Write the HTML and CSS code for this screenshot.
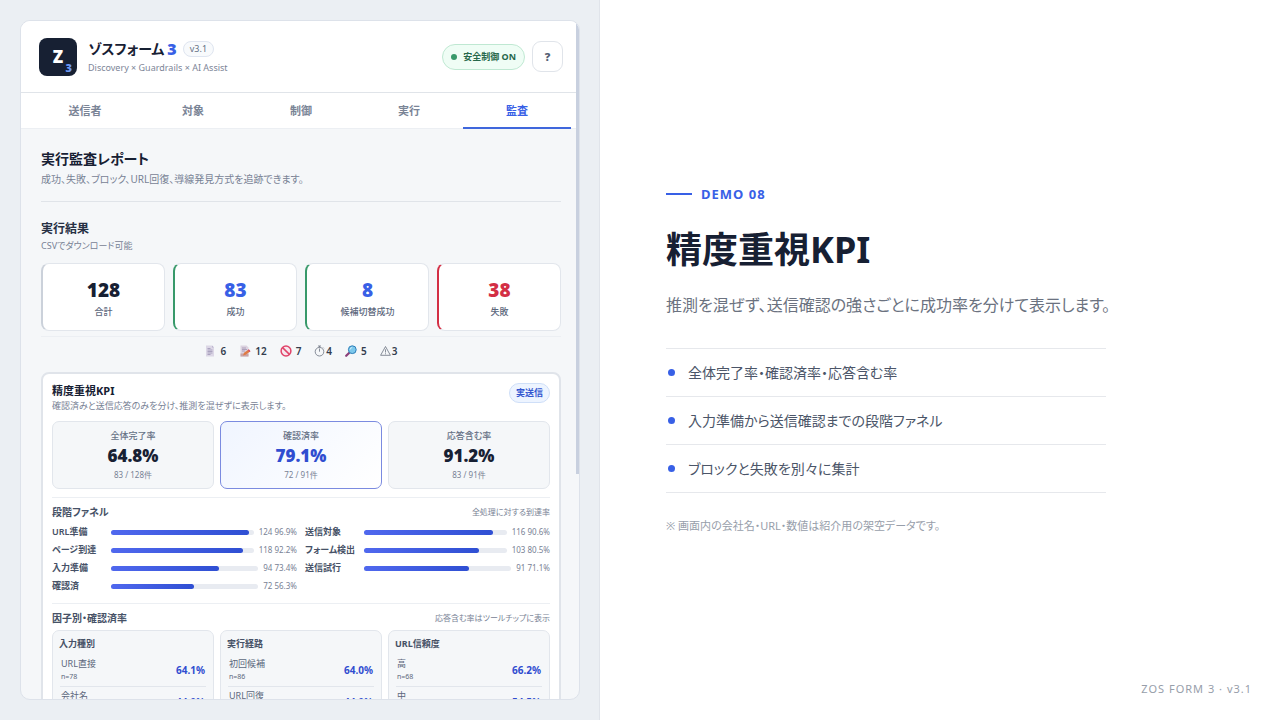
FILE: index.html
```html
<!DOCTYPE html>
<html lang="ja">
<head>
  <meta charset="UTF-8">
  <meta name="viewport" content="width=device-width, initial-scale=1.0">
  <title>ZOS FORM 3 – 精度重視KPI</title>
  <link rel="stylesheet" href="styles.css">
</head>
<body>
  <div class="slide">
    <section class="stage">
      <div class="app">
        <header class="app-header">
          <div class="logo">Z<span class="logo-sub">3</span></div>
          <div class="brand">
            <div class="brand-name">ゾスフォーム <b>3</b><span class="version">v3.1</span></div>
            <div class="brand-sub">Discovery × Guardrails × AI Assist</div>
          </div>
          <div class="safe"><i class="dot"></i>安全制御 ON</div>
          <button class="help" type="button">?</button>
        </header>

        <nav class="tabs">
          <button type="button">送信者</button>
          <button type="button">対象</button>
          <button type="button">制御</button>
          <button type="button">実行</button>
          <button type="button" class="active">監査</button>
        </nav>

        <main class="content">
          <div class="page-head">
            <h2>実行監査レポート</h2>
            <p>成功、失敗、ブロック、URL回復、導線発見方式を追跡できます。</p>
          </div>

          <div class="result-head">
            <h3>実行結果</h3>
            <p>CSVでダウンロード可能</p>
          </div>
          <div class="stats">
            <div class="stat"><strong>128</strong><span>合計</span></div>
            <div class="stat good"><strong>83</strong><span>成功</span></div>
            <div class="stat good"><strong>8</strong><span>候補切替成功</span></div>
            <div class="stat bad"><strong>38</strong><span>失敗</span></div>
          </div>

          <div class="reasons">
            <span>
              <svg width="12" height="12" viewBox="0 0 12 12"><path d="M2 .5h6l2 2v9H2z" fill="#dcd7e6"/><path d="M8 .5v2h2z" fill="#b9b1cc"/><path d="M3.5 3.5h3M3.5 5h5M3.5 6.500h5M3.5 8h5M3.500 9.500h3" stroke="#9d94b5" stroke-width=".8"/></svg>6
            </span>
            <span>
              <svg width="12" height="12" viewBox="0 0 12 12"><path d="M1.500 .5h6l2 2v9h-8z" fill="#dcd3e0"/><path d="M3 3h4M3 4.500h5M3 6h3" stroke="#a195b3" stroke-width=".8"/><path d="M1.500 8.500h8v3h-8z" fill="#c9a3a5"/><path d="M4 10.500l1-2.800 4.600-3.200 1.600 2-4.600 3.300z" fill="#e07b45"/><path d="M9 5l.9-.8 1.600 2-.9.700z" fill="#d6426a"/></svg>12
            </span>
            <span>
              <svg width="12" height="12" viewBox="0 0 12 12"><circle cx="6" cy="6" r="4.900" fill="#f6e8ee" stroke="#e0446a" stroke-width="1.500"/><path d="M2.600 2.600l6.800 6.800" stroke="#e0446a" stroke-width="1.500"/></svg>7
            </span>
            <span class="tight">
              <svg width="11" height="12" viewBox="0 0 11 12" fill="none" stroke="#6b7280" stroke-width=".8"><circle cx="5.500" cy="6.700" r="4.300"/><path d="M5.500 6.700V3.500M5.500 2.400V1M4 1h3M9 2.500l.8.800"/></svg>4
            </span>
            <span>
              <svg width="12" height="12" viewBox="0 0 12 12"><path d="M4.800 7.200L1.200 10.800" stroke="#8a3f79" stroke-width="2.200" stroke-linecap="round"/><circle cx="7.300" cy="4.700" r="3.900" fill="#7cc8ec" stroke="#2f7fb8" stroke-width="1"/><path d="M5.200 4.500a2.200 2.200 0 0 1 2-2" stroke="#d4f0fb" fill="none"/></svg>5
            </span>
            <span class="tight">
              <svg width="11" height="12" viewBox="0 0 11 12" fill="none" stroke="#6b7280" stroke-width=".8"><path d="M5.500 1.500l4.900 8.800H.6z"/><path d="M5.500 4.300v3.200M5.500 8.300v1"/></svg>3
            </span>
          </div>

          <section class="kpi">
            <div class="kpi-head">
              <div>
                <h3>精度重視KPI</h3>
                <p>確認済みと送信応答のみを分け、推測を混ぜずに表示します。</p>
              </div>
              <span class="tag">実送信</span>
            </div>
            <div class="tiles">
              <div class="tile"><span>全体完了率</span><strong>64.8%</strong><small>83 / 128件</small></div>
              <div class="tile main"><span>確認済率</span><strong>79.1%</strong><small>72 / 91件</small></div>
              <div class="tile"><span>応答含む率</span><strong>91.2%</strong><small>83 / 91件</small></div>
            </div>

            <div class="block">
              <div class="block-head"><h4>段階ファネル</h4><span>全処理に対する到達率</span></div>
              <div class="funnel">
                <div class="step"><b>URL準備</b><div class="bar"><i style="width:96.9%"></i></div><span>124 96.9%</span></div>
                <div class="step"><b>送信対象</b><div class="bar"><i style="width:90.6%"></i></div><span>116 90.6%</span></div>
                <div class="step"><b>ページ到達</b><div class="bar"><i style="width:92.2%"></i></div><span>118 92.2%</span></div>
                <div class="step"><b>フォーム検出</b><div class="bar"><i style="width:80.5%"></i></div><span>103 80.5%</span></div>
                <div class="step"><b>入力準備</b><div class="bar"><i style="width:73.4%"></i></div><span>94 73.4%</span></div>
                <div class="step"><b>送信試行</b><div class="bar"><i style="width:71.1%"></i></div><span>91 71.1%</span></div>
                <div class="step"><b>確認済</b><div class="bar"><i style="width:56.3%"></i></div><span>72 56.3%</span></div>
              </div>
            </div>

            <div class="block">
              <div class="block-head"><h4>因子別・確認済率</h4><span>応答含む率はツールチップに表示</span></div>
              <div class="factors">
                <div class="factor">
                  <h5>入力種別</h5>
                  <div class="row"><div>URL直接<small>n=78</small></div><b>64.1%</b></div>
                  <div class="row"><div>会社名</div><b>44.0%</b></div>
                </div>
                <div class="factor">
                  <h5>実行経路</h5>
                  <div class="row"><div>初回候補<small>n=86</small></div><b>64.0%</b></div>
                  <div class="row"><div>URL回復</div><b>44.0%</b></div>
                </div>
                <div class="factor">
                  <h5>URL信頼度</h5>
                  <div class="row"><div>高<small>n=68</small></div><b>66.2%</b></div>
                  <div class="row"><div>中</div><b>54.5%</b></div>
                </div>
              </div>
            </div>
          </section>
        </main>
        <div class="scrollbar"></div>
      </div>
    </section>

    <section class="copy">
      <div class="copy-body">
        <div class="eyebrow">DEMO 08</div>
        <h1>精度重視KPI</h1>
        <p class="lead">推測を混ぜず、送信確認の強さごとに成功率を分けて表示します。</p>
        <ul class="points">
          <li>全体完了率・確認済率・応答含む率</li>
          <li>入力準備から送信確認までの段階ファネル</li>
          <li>ブロックと失敗を別々に集計</li>
        </ul>
        <p class="note">※ 画面内の会社名・URL・数値は紹介用の架空データです。</p>
      </div>
      <footer>ZOS FORM 3 · v3.1</footer>
    </section>
  </div>
</body>
</html>
```
FILE: styles.css
```css
* {
  box-sizing: border-box;
}
body {
  margin: 0;
  font-family: "Noto Sans", "Noto Sans CJK JP", sans-serif;
  font-feature-settings: "palt";
  color: #172033;
  background: #fff;
}
h1, h2, h3, h4, h5, p, ul {
  margin: 0;
  padding: 0;
}
button {
  font: inherit;
  font-feature-settings: inherit;
  cursor: pointer;
}
.slide {
  display: grid;
  grid-template-columns: 15fr 17fr;
  height: 100vh;
}

/* Left: app window */
.stage {
  display: flex;
  min-height: 0;
  padding: 20px;
  background: #ebeff3;
  box-shadow: inset -1px 0 #e0e4ea;
}
.app {
  position: relative;
  flex: 1;
  min-width: 0;
  overflow: hidden;
  background: #f5f7f9;
  border: 1px solid #dde2ea;
  border-radius: 10px;
}
.app-header {
  display: flex;
  align-items: center;
  height: 72px;
  padding: 0 16px 0 18px;
  background: #fff;
  border-bottom: 1px solid #e0e4e9;
}
.logo {
  position: relative;
  width: 38px;
  height: 38px;
  border-radius: 8px;
  background: #172033;
  color: #fff;
  font-size: 17px;
  font-weight: 900;
  line-height: 38px;
  text-align: center;
}
.logo-sub {
  position: absolute;
  right: 5px;
  bottom: 2px;
  color: #6d9af5;
  font-size: 11px;
  line-height: 12px;
}
.brand {
  flex: 1;
  margin-left: 11px;
}
.brand-name {
  display: flex;
  align-items: center;
  font-size: 14px;
  font-weight: 700;
  line-height: 20px;
}
.brand-name b {
  margin-left: 3px;
  color: #3860e6;
  font-size: 16px;
  font-weight: 900;
}
.version {
  margin-left: 6px;
  padding: 0 6px;
  border: 1px solid #dfe5f0;
  border-radius: 8px;
  background: #f8fafc;
  color: #647084;
  font-size: 9px;
  font-weight: 400;
  line-height: 14px;
}
.brand-sub {
  margin-top: 2px;
  color: #7c8597;
  font-size: 9px;
  line-height: 14px;
}
.safe {
  display: flex;
  align-items: center;
  gap: 6px;
  height: 26px;
  padding: 0 8px;
  border: 1px solid #bfe8d2;
  border-radius: 13px;
  background: #effdf5;
  color: #27684b;
  font-size: 9px;
  font-weight: 700;
}
.dot {
  width: 6px;
  height: 6px;
  border-radius: 50%;
  background: #38996a;
}
.help {
  width: 31px;
  height: 31px;
  margin-left: 7px;
  padding: 0;
  border: 1px solid #e0e4ea;
  border-radius: 9px;
  background: #fff;
  color: #566174;
  font-size: 11px;
  font-weight: 900;
}
.tabs {
  display: flex;
  height: 36px;
  padding: 0 8px 0 10px;
  background: #fff;
  border-bottom: 1px solid #eceff3;
}
.tabs button {
  flex: 1;
  height: 36px;
  padding: 0;
  border: 0;
  border-bottom: 2px solid transparent;
  background: none;
  color: #7a8496;
  font-size: 11px;
  font-weight: 700;
}
.tabs .active {
  color: #3860e6;
  border-bottom-color: #3f67dc;
}
.content {
  padding: 20px 18px 0 20px;
}
.page-head {
  padding-bottom: 14px;
  border-bottom: 1px solid #e0e4e9;
}
.page-head h2 {
  font-size: 14px;
  line-height: 20px;
}
.page-head p {
  margin-top: 2px;
  color: #788295;
  font-size: 10px;
  line-height: 16px;
}
.result-head {
  padding: 18px 0 9px;
}
.result-head h3 {
  color: #273044;
  font-size: 12px;
  line-height: 18px;
}
.result-head p {
  color: #788295;
  font-size: 9px;
  line-height: 16px;
}
.stats {
  display: grid;
  grid-template-columns: repeat(4, 1fr);
  gap: 8px;
}
.stat {
  display: flex;
  flex-direction: column;
  align-items: center;
  height: 68px;
  padding: 14px 0 0;
  border: 1px solid #e2e6ec;
  border-left: 2px solid #cbd1da;
  border-radius: 8px;
  background: #fff;
}
.stat strong {
  font-size: 19px;
  font-weight: 900;
  line-height: 24px;
}
.stat span {
  margin-top: 3px;
  color: #5c677c;
  font-size: 9px;
  font-weight: 500;
  line-height: 14px;
}
.stat.good {
  border-left-color: #38996a;
}
.stat.good strong {
  color: #3860e6;
}
.stat.bad {
  border-left-color: #d32f45;
}
.stat.bad strong {
  color: #d32f45;
}
.reasons {
  display: flex;
  justify-content: center;
  gap: 13px;
  margin-top: 5px;
  padding: 7px 0 14px;
  border-top: 1px solid #eceff3;
  color: #333c4d;
  font-size: 10px;
  font-weight: 600;
  line-height: 14px;
}
.reasons span {
  display: flex;
  align-items: center;
  gap: 4px;
}
.reasons .tight {
  gap: 1px;
}

/* KPI panel */
.kpi {
  padding: 9px;
  border: 2px solid #e0e4ea;
  border-radius: 8px;
  background: #fff;
}
.kpi-head {
  display: flex;
  justify-content: space-between;
  align-items: center;
}
.kpi-head h3 {
  font-size: 11px;
  line-height: 16px;
}
.kpi-head p {
  color: #788295;
  font-size: 9px;
  line-height: 14px;
}
.tag {
  margin-bottom: 10px;
  padding: 0 6px;
  border: 1px solid #cfdff8;
  border-radius: 10px;
  background: #edf4ff;
  color: #3456d0;
  font-size: 9px;
  font-weight: 700;
  line-height: 18px;
}
.tiles, .factors {
  display: grid;
  grid-template-columns: repeat(3, 1fr);
  gap: 6px;
}
.tiles {
  margin-top: 8px;
}
.tile {
  display: flex;
  flex-direction: column;
  align-items: center;
  height: 68px;
  padding-top: 7px;
  border: 1px solid #e2e6ec;
  border-radius: 7px;
  background: #f5f7f9;
}
.tile span {
  color: #667186;
  font-size: 9px;
  font-weight: 500;
  line-height: 14px;
}
.tile strong {
  font-size: 17px;
  font-weight: 900;
  line-height: 26px;
}
.tile small {
  color: #788295;
  font-size: 8px;
  line-height: 12px;
}
.tile.main {
  border-color: #7b8be0;
  background: linear-gradient(135deg, #f0f5ff, #fff);
}
.tile.main strong {
  color: #304dd0;
}
.block {
  margin-top: 8px;
  padding-top: 5px;
  border-top: 1px solid #eceff3;
}
.block-head {
  display: flex;
  justify-content: space-between;
  line-height: 18px;
}
.block-head h4 {
  color: #465166;
  font-size: 10px;
}
.block-head span {
  color: #788295;
  font-size: 8px;
}
.funnel {
  display: grid;
  grid-template-columns: 1fr 1fr;
  gap: 4px 8px;
  margin-top: 4px;
  padding-bottom: 2px;
}
.step {
  display: flex;
  align-items: center;
  gap: 5px;
  line-height: 14px;
}
.step b {
  width: 54px;
  color: #465166;
  font-size: 9px;
  font-weight: 600;
}
.step span {
  color: #788295;
  font-size: 8px;
}
.bar {
  flex: 1;
  height: 5px;
  border-radius: 3px;
  background: #e8ebf1;
}
.bar i {
  display: block;
  height: 100%;
  border-radius: 3px;
  background: linear-gradient(90deg, #5068ee, #2f4fd3);
}
.factors {
  margin-top: 3px;
}
.factor {
  padding: 6px;
  border: 1px solid #e2e6ec;
  border-radius: 7px;
  background: #f5f7f9;
}
.factor h5 {
  margin-bottom: 4px;
  color: #465166;
  font-size: 9px;
  line-height: 14px;
}
.row {
  display: flex;
  justify-content: space-between;
  align-items: center;
  min-height: 32px;
  margin: 0 1px;
  padding: 2px 1px 3px;
  border-bottom: 1px solid #e2e6ec;
  color: #5c677c;
  font-size: 9px;
  line-height: 14px;
}
.row div {
  align-self: flex-start;
}
.row small {
  display: block;
  font-size: 7px;
  line-height: 12px;
}
.row b {
  color: #304dd0;
  font-size: 10px;
}
.scrollbar {
  position: absolute;
  top: 0;
  right: 0;
  width: 3px;
  height: 453px;
  background: #c8d0df;
}

/* Right: description */
.copy {
  position: relative;
  display: flex;
  align-items: center;
  padding: 0 66px;
}
.copy-body {
  width: 100%;
  max-width: 440px;
}
.eyebrow {
  display: flex;
  align-items: center;
  gap: 9px;
  color: #3860e6;
  font-size: 13px;
  font-weight: 700;
  letter-spacing: 1px;
  line-height: 18px;
}
.eyebrow::before {
  content: "";
  width: 26px;
  height: 2px;
  background: #3860e6;
}
h1 {
  margin-top: 23px;
  font-size: 36px;
  line-height: 48px;
}
.lead {
  margin-top: 17px;
  color: #6b7280;
  font-size: 16px;
  line-height: 28px;
  white-space: nowrap;
}
.points {
  margin-top: 29px;
  border-top: 1px solid #e6e8ec;
  list-style: none;
}
.points li {
  display: flex;
  align-items: center;
  gap: 13px;
  padding-left: 2px;
  border-bottom: 1px solid #e6e8ec;
  color: #4b5568;
  font-size: 14px;
  line-height: 47px;
}
.points li::before {
  content: "";
  width: 7px;
  height: 7px;
  border-radius: 50%;
  background: #3860e6;
}
.note {
  margin-top: 24px;
  color: #979eaa;
  font-size: 11px;
  line-height: 18px;
}
.copy footer {
  position: absolute;
  right: 28px;
  bottom: 22px;
  color: #979eaa;
  font-size: 11px;
  letter-spacing: 1px;
  line-height: 18px;
}
```
